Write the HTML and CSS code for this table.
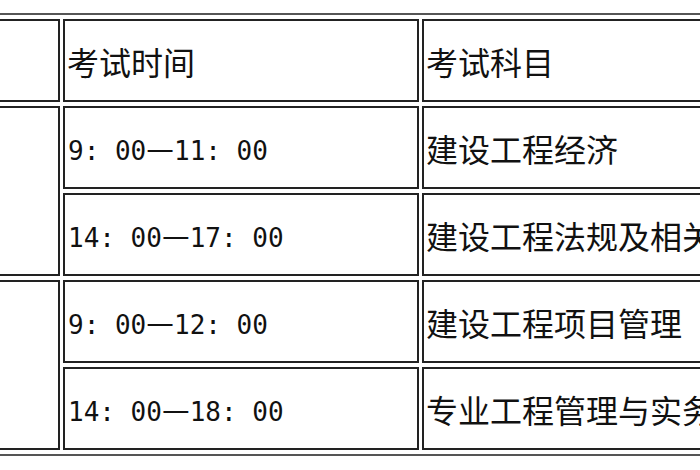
FILE: index.html
```html
<!DOCTYPE html>
<html lang="zh-CN">
<head>
<meta charset="utf-8">
<title>考试时间</title>
<link rel="stylesheet" href="styles.css">
</head>
<body>
<table class="exam">
  <tr>
    <td class="c1"></td>
    <td class="c2">考试时间</td>
    <td class="c3">考试科目</td>
  </tr>
  <tr>
    <td rowspan="2"></td>
    <td class="time">9: 00<span class="dash">—</span>11: 00</td>
    <td class="subj">建设工程经济</td>
  </tr>
  <tr>
    <td class="time">14: 00<span class="dash">—</span>17: 00</td>
    <td class="subj">建设工程法规及相关知识</td>
  </tr>
  <tr>
    <td rowspan="2"></td>
    <td class="time">9: 00<span class="dash">—</span>12: 00</td>
    <td class="subj">建设工程项目管理</td>
  </tr>
  <tr>
    <td class="time">14: 00<span class="dash">—</span>18: 00</td>
    <td class="subj">专业工程管理与实务</td>
  </tr>
</table>
</body>
</html>
```
FILE: styles.css
```css
html, body {
  margin: 0;
  padding: 0;
  overflow: hidden;
  background: #fff;
  width: 700px;
  height: 470px;
}
body {
  font-family: "Noto Sans CJK SC", "Liberation Sans", sans-serif;
  color: #111;
}
.exam {
  margin-top: 13px;
  margin-left: -45px;
  border: 2px solid #555;
  border-spacing: 3px 4px;
  table-layout: fixed;
  width: 900px;
}
.exam td {
  box-sizing: border-box;
  border: 2px solid #222;
  height: 83px;
  padding: 0 0 0 2px;
  vertical-align: middle;
  font-size: 32px;
  line-height: 1;
  white-space: nowrap;
  overflow: hidden;
}
.exam .c1 { width: 100px; }
.exam .c2 { width: 356px; }
.exam .c3 { width: 435px; }
.exam .c3, .exam .subj { padding-left: 2px; }
.exam .time {
  font-family: "DejaVu Sans Mono", "Noto Sans CJK SC", monospace;
  font-size: 26px;
  padding-left: 3px;
}
.dash {
  font-family: "Noto Sans CJK SC", sans-serif;
  font-size: 31px;
}
```
